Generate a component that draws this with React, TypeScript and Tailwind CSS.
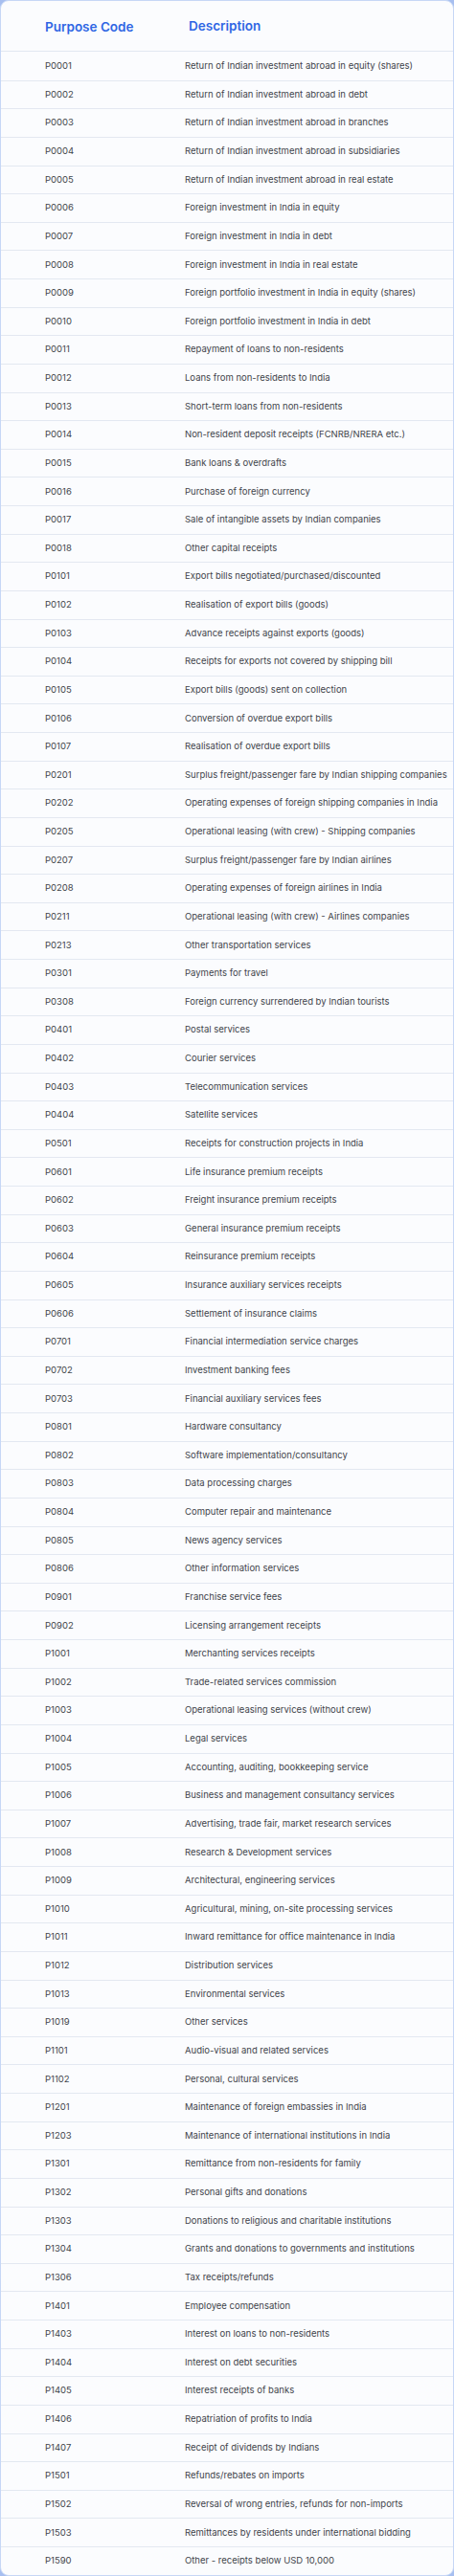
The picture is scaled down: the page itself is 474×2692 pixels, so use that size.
const rows: [string, string][] = [
  ["P0001", "Return of Indian investment abroad in equity (shares)"],
  ["P0002", "Return of Indian investment abroad in debt"],
  ["P0003", "Return of Indian investment abroad in branches"],
  ["P0004", "Return of Indian investment abroad in subsidiaries"],
  ["P0005", "Return of Indian investment abroad in real estate"],
  ["P0006", "Foreign investment in India in equity"],
  ["P0007", "Foreign investment in India in debt"],
  ["P0008", "Foreign investment in India in real estate"],
  ["P0009", "Foreign portfolio investment in India in equity (shares)"],
  ["P0010", "Foreign portfolio investment in India in debt"],
  ["P0011", "Repayment of loans to non-residents"],
  ["P0012", "Loans from non-residents to India"],
  ["P0013", "Short-term loans from non-residents"],
  ["P0014", "Non-resident deposit receipts (FCNRB/NRERA etc.)"],
  ["P0015", "Bank loans & overdrafts"],
  ["P0016", "Purchase of foreign currency"],
  ["P0017", "Sale of intangible assets by Indian companies"],
  ["P0018", "Other capital receipts"],
  ["P0101", "Export bills negotiated/purchased/discounted"],
  ["P0102", "Realisation of export bills (goods)"],
  ["P0103", "Advance receipts against exports (goods)"],
  ["P0104", "Receipts for exports not covered by shipping bill"],
  ["P0105", "Export bills (goods) sent on collection"],
  ["P0106", "Conversion of overdue export bills"],
  ["P0107", "Realisation of overdue export bills"],
  ["P0201", "Surplus freight/passenger fare by Indian shipping companies"],
  ["P0202", "Operating expenses of foreign shipping companies in India"],
  ["P0205", "Operational leasing (with crew) - Shipping companies"],
  ["P0207", "Surplus freight/passenger fare by Indian airlines"],
  ["P0208", "Operating expenses of foreign airlines in India"],
  ["P0211", "Operational leasing (with crew) - Airlines companies"],
  ["P0213", "Other transportation services"],
  ["P0301", "Payments for travel"],
  ["P0308", "Foreign currency surrendered by Indian tourists"],
  ["P0401", "Postal services"],
  ["P0402", "Courier services"],
  ["P0403", "Telecommunication services"],
  ["P0404", "Satellite services"],
  ["P0501", "Receipts for construction projects in India"],
  ["P0601", "Life insurance premium receipts"],
  ["P0602", "Freight insurance premium receipts"],
  ["P0603", "General insurance premium receipts"],
  ["P0604", "Reinsurance premium receipts"],
  ["P0605", "Insurance auxiliary services receipts"],
  ["P0606", "Settlement of insurance claims"],
  ["P0701", "Financial intermediation service charges"],
  ["P0702", "Investment banking fees"],
  ["P0703", "Financial auxiliary services fees"],
  ["P0801", "Hardware consultancy"],
  ["P0802", "Software implementation/consultancy"],
  ["P0803", "Data processing charges"],
  ["P0804", "Computer repair and maintenance"],
  ["P0805", "News agency services"],
  ["P0806", "Other information services"],
  ["P0901", "Franchise service fees"],
  ["P0902", "Licensing arrangement receipts"],
  ["P1001", "Merchanting services receipts"],
  ["P1002", "Trade-related services commission"],
  ["P1003", "Operational leasing services (without crew)"],
  ["P1004", "Legal services"],
  ["P1005", "Accounting, auditing, bookkeeping service"],
  ["P1006", "Business and management consultancy services"],
  ["P1007", "Advertising, trade fair, market research services"],
  ["P1008", "Research & Development services"],
  ["P1009", "Architectural, engineering services"],
  ["P1010", "Agricultural, mining, on-site processing services"],
  ["P1011", "Inward remittance for office maintenance in India"],
  ["P1012", "Distribution services"],
  ["P1013", "Environmental services"],
  ["P1019", "Other services"],
  ["P1101", "Audio-visual and related services"],
  ["P1102", "Personal, cultural services"],
  ["P1201", "Maintenance of foreign embassies in India"],
  ["P1203", "Maintenance of international institutions in India"],
  ["P1301", "Remittance from non-residents for family"],
  ["P1302", "Personal gifts and donations"],
  ["P1303", "Donations to religious and charitable institutions"],
  ["P1304", "Grants and donations to governments and institutions"],
  ["P1306", "Tax receipts/refunds"],
  ["P1401", "Employee compensation"],
  ["P1403", "Interest on loans to non-residents"],
  ["P1404", "Interest on debt securities"],
  ["P1405", "Interest receipts of banks"],
  ["P1406", "Repatriation of profits to India"],
  ["P1407", "Receipt of dividends by Indians"],
  ["P1501", "Refunds/rebates on imports"],
  ["P1502", "Reversal of wrong entries, refunds for non-imports"],
  ["P1503", "Remittances by residents under international bidding"],
  ["P1590", "Other - receipts below USD 10,000"],
];

export default function App() {
  return (
    <div className="w-[474px] bg-[#a7bff0] font-['Inter','Liberation_Sans',sans-serif]">
      <div className="overflow-hidden rounded-[9px] border border-[#c6d7f6] bg-[#fbfcfe]">
        {/* header */}
        <div className="flex h-[53px] items-center border-b border-[#e1e7f1]">
          <div className="w-[192px] shrink-0 pl-[46px] pt-[2px] text-[13.5px] font-semibold text-[#2f66e4]">
            Purpose Code
          </div>
          <div className="pl-[4px] text-[13.5px] font-semibold text-[#2f66e4]">
            Description
          </div>
        </div>
        {rows.map(([code, desc], i) => (
          <div
            key={code}
            className={
              i === 0
                ? "flex h-[29.63px] items-center text-[9.5px] text-[#3f444b]"
                : "flex h-[29.63px] items-center border-t border-[#e3e8f1] text-[9.5px] text-[#3f444b]"
            }
          >
            <div className="w-[192px] shrink-0 pl-[46px]">{code}</div>
            <div className="whitespace-nowrap">{desc}</div>
          </div>
        ))}
      </div>
    </div>
  );
}
